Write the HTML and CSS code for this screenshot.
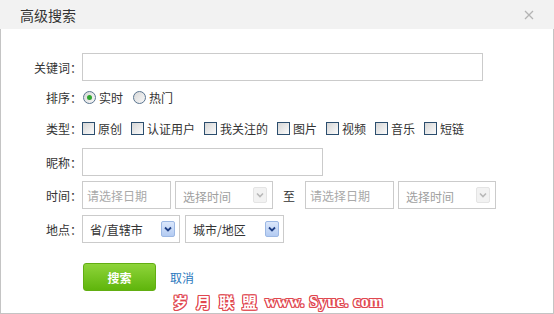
FILE: index.html
```html
<!DOCTYPE html>
<html>
<head>
	<meta charset="utf-8">
	<title>高级搜索</title>
	<link rel="stylesheet" href="styles.css">
</head>
<body>
<div class="dialog">
	<div class="head">
		<span class="title">高级搜索</span>
		<span class="close"><svg width="10" height="10" viewBox="0 0 10 10"><path d="M1 1L9 9M9 1L1 9" stroke="#b4b4b4" stroke-width="1.3" fill="none"/></svg></span>
	</div>
	<form class="body">
		<div class="row r1">
			<label class="lbl">关键词：</label><input type="text" class="txt keyword">
		</div>
		<div class="row r2">
			<label class="lbl">排序：</label>
			<span class="opt first"><i class="radio on"></i>实时</span>
			<span class="opt"><i class="radio"></i>热门</span>
		</div>
		<div class="row r3">
			<label class="lbl">类型：</label>
			<span class="opt first"><i class="check"></i>原创</span>
			<span class="opt"><i class="check"></i>认证用户</span>
			<span class="opt"><i class="check"></i>我关注的</span>
			<span class="opt"><i class="check"></i>图片</span>
			<span class="opt"><i class="check"></i>视频</span>
			<span class="opt"><i class="check"></i>音乐</span>
			<span class="opt"><i class="check"></i>短链</span>
		</div>
		<div class="row r4">
			<label class="lbl">昵称：</label><input type="text" class="txt nick">
		</div>
		<div class="row r5">
			<label class="lbl">时间：</label>
			<input type="text" class="txt date" placeholder="请选择日期">
			<div class="sel time off"><span>选择时间</span><span class="arr"><svg width="8" height="6" viewBox="0 0 8 6"><path d="M1 1.5L4 4.5L7 1.5" stroke="#b8b8b8" stroke-width="1.6" fill="none"/></svg></span></div>
			<span class="to">至</span>
			<input type="text" class="txt date" placeholder="请选择日期">
			<div class="sel time off"><span>选择时间</span><span class="arr"><svg width="8" height="6" viewBox="0 0 8 6"><path d="M1 1.5L4 4.5L7 1.5" stroke="#b8b8b8" stroke-width="1.6" fill="none"/></svg></span></div>
		</div>
		<div class="row r6">
			<label class="lbl">地点：</label>
			<div class="sel loc"><span>省/直辖市</span><span class="arr"><svg width="8" height="6" viewBox="0 0 8 6"><path d="M1 1.5L4 4.5L7 1.5" stroke="#1f3f86" stroke-width="1.8" fill="none"/></svg></span></div>
			<div class="sel loc city"><span>城市/地区</span><span class="arr"><svg width="8" height="6" viewBox="0 0 8 6"><path d="M1 1.5L4 4.5L7 1.5" stroke="#1f3f86" stroke-width="1.8" fill="none"/></svg></span></div>
		</div>
		<div class="row r7">
			<span class="lbl"></span>
			<button type="button" class="btn">搜索</button>
			<a class="cancel" href="#">取消</a>
		</div>
	</form>
	<div class="mark"><span class="cn">岁月联盟</span><span class="en">www. Syue. com</span></div>
</div>
</body>
</html>
```

FILE: styles.css
```css
body {
	margin: 0;
	font: 12px "Noto Sans CJK SC", "Liberation Sans", sans-serif;
	color: #333;
}

.dialog {
	position: relative;
	width: 554px;
	height: 314px;
	box-sizing: border-box;
	border: 1px solid #c4c4c4;
	border-top: 0;
	background: #fff;
}

.head {
	height: 29px;
	background: #f2f2f2;
	display: flex;
	align-items: center;
	justify-content: space-between;
	padding: 0 20px 0 20px;
	margin: 0 -1px;
}

.title {
	font-size: 14px;
	color: #333;
}

.close {
	display: flex;
	margin-top: 1px;
}

.body {
	padding-top: 24px;
}

.row {
	display: flex;
	align-items: center;
}

.r1 { height: 28px; }
.r2 { height: 20px; margin-top: 6px; }
.r3 { height: 20px; margin-top: 11px; }
.r4 { height: 28px; margin-top: 10px; }
.r5 { height: 28px; margin-top: 5px; }
.r6 { height: 28px; margin-top: 6px; }
.r7 { height: 28px; margin-top: 20px; }

.lbl {
	width: 81px;
	flex: none;
	text-align: right;
	color: #333;
}

.txt {
	box-sizing: border-box;
	height: 28px;
	border: 1px solid #cbcbcb;
	padding: 0 4px;
	margin: 0;
	font: 12px "Noto Sans CJK SC", sans-serif;
	color: #333;
	outline: none;
}

.txt::placeholder {
	color: #a9a9a9;
}

.keyword { width: 401px; }
.nick { width: 241px; }
.date { width: 89px; }

.opt {
	display: flex;
	align-items: center;
	margin-left: 9px;
}

.opt.first {
	margin-left: 0;
}

.radio {
	width: 13px;
	height: 13px;
	box-sizing: border-box;
	border: 1px solid #5a7590;
	border-radius: 50%;
	margin: 0 3px 0 1px;
	background: linear-gradient(135deg, #d8d8d8, #f8f8f8);
	display: flex;
	align-items: center;
	justify-content: center;
}

.radio.on::after {
	content: "";
	width: 5px;
	height: 5px;
	border-radius: 50%;
	background: #2fa52f;
}

.check {
	width: 13px;
	height: 13px;
	box-sizing: border-box;
	border: 1px solid #2c4e6e;
	margin-right: 3px;
	background: linear-gradient(135deg, #d6d6d6, #fbfbfb);
}

.sel {
	box-sizing: border-box;
	height: 28px;
	border: 1px solid #cbcbcb;
	display: flex;
	align-items: center;
	justify-content: space-between;
	padding: 0 4px 0 7px;
	background: #fff;
}

.sel.time {
	width: 98px;
	margin-left: 4px;
	padding-right: 5px;
	padding-top: 2px;
}

.sel.off {
	color: #a0a0a0;
}

.sel.loc {
	width: 98px;
	color: #333;
}

.sel.city {
	width: 99px;
	margin-left: 5px;
}

.arr {
	width: 14px;
	height: 16px;
	box-sizing: border-box;
	display: flex;
	align-items: center;
	justify-content: center;
	border: 1px solid #9cb8e4;
	border-radius: 2px;
	background: linear-gradient(#dbe7fb, #b3cbf2);
}

.off .arr {
	border-color: #e4e4e4;
	background: #f2f2f2;
	margin-top: -2px;
}

.to {
	margin: 0 10px;
	color: #333;
}

.btn {
	width: 73px;
	height: 28px;
	box-sizing: border-box;
	border: 1px solid #62ae12;
	border-radius: 3px;
	background: linear-gradient(#8ed43a, #5fb50c);
	color: #fff;
	font: bold 12px "Noto Sans CJK SC", sans-serif;
	padding: 0;
	margin-left: 1px;
}

.cancel {
	color: #2a78bd;
	text-decoration: none;
	margin-left: 14px;
}

/* watermark, drawn as outlined text */
.mark {
	position: absolute;
	left: 172px;
	top: 292px;
	height: 20px;
	display: flex;
	align-items: center;
	color: #fff;
	text-shadow: 1px 0 0 #e0474f, -1px 0 0 #e0474f, 0 1px 0 #e0474f, 0 -1px 0 #e0474f,
		1px 1px 0 #e0474f, -1px -1px 0 #e0474f, 1px -1px 0 #e0474f, -1px 1px 0 #e0474f;
	white-space: pre;
}

.mark .cn {
	font: bold 15px/20px "Noto Sans CJK SC", sans-serif;
	letter-spacing: 8px;
}

.mark .en {
	font: bold 16px/20px "Liberation Serif", serif;
	letter-spacing: 0.5px;
}
```
